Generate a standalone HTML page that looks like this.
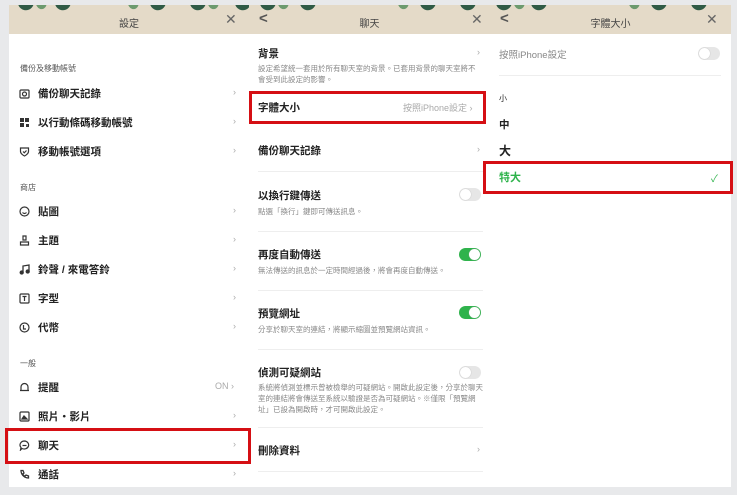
<!DOCTYPE html>
<html><head><meta charset="utf-8"><style>
*{margin:0;padding:0;box-sizing:border-box}
body{width:737px;height:495px;background:#e8e9eb;position:relative;overflow:hidden;font-family:"Liberation Sans","Noto Sans CJK TC",sans-serif;color:#222}
.a{position:absolute}
.hdr{position:absolute;top:5px;height:29px;background:#e4dac8;overflow:hidden}
.hdr .t{position:absolute;top:10px;width:100%;text-align:center;font-size:10px;color:#444}
.hdr .x{position:absolute;top:6px;font-size:14px;color:#666}
.hdr .b{position:absolute;top:5px;font-size:15px;color:#555;font-weight:bold}
.leaf{position:absolute;top:-7px;width:16px;height:12px;background:#2f5a45;transform:rotate(25deg);border-radius:0 0 10px 10px}
.lf2{position:absolute;top:-4px;width:10px;height:8px;background:#6c9a6e;transform:rotate(-30deg);border-radius:0 0 6px 6px}
.w{position:absolute;background:#fff;top:34px;height:453px}
.sec{position:absolute;font-size:8px;color:#555}
.it{position:absolute;font-size:10.5px;font-weight:bold;color:#222}
.ic{position:absolute;left:19px;width:11px;height:11px}
.ch{position:absolute;font-size:9px;color:#aaa}
.d{position:absolute;font-size:7.5px;color:#888;line-height:11px}
.ln{position:absolute;height:1px;background:#eee}
.tg{position:absolute;width:22px;height:13px;border-radius:7px;background:#e6e6e6}
.tg::after{content:"";position:absolute;top:1px;left:1px;width:11px;height:11px;border-radius:50%;background:#fff;box-shadow:0 0 1px #aaa}
.tg.on{background:#2fb34c}
.tg.on::after{left:10px}
.rb{position:absolute;border:3px solid #d50f14}
</style></head><body>
<div class="w" style="left:9px;width:722px"></div>
<div class="hdr" style="left:9px;width:240px"><div class="t">設定</div><div class="x" style="left:216px">✕</div>
<div class="leaf" style="left:8px"></div><div class="lf2" style="left:28px"></div><div class="leaf" style="left:45px"></div><div class="lf2" style="left:120px"></div><div class="leaf" style="left:140px"></div><div class="leaf" style="left:180px"></div><div class="lf2" style="left:200px"></div><div class="leaf" style="left:225px"></div></div>
<div class="hdr" style="left:249px;width:241px"><div class="t">聊天</div><div class="b" style="left:10px">&lt;</div><div class="x" style="left:222px">✕</div>
<div class="leaf" style="left:10px"></div><div class="lf2" style="left:30px"></div><div class="leaf" style="left:50px"></div><div class="lf2" style="left:150px"></div><div class="leaf" style="left:170px"></div><div class="leaf" style="left:210px"></div></div>
<div class="hdr" style="left:490px;width:241px"><div class="t">字體大小</div><div class="b" style="left:10px">&lt;</div><div class="x" style="left:216px">✕</div>
<div class="leaf" style="left:5px"></div><div class="lf2" style="left:25px"></div><div class="leaf" style="left:40px"></div><div class="lf2" style="left:140px"></div><div class="leaf" style="left:160px"></div><div class="leaf" style="left:200px"></div></div>

<!-- panel 1 -->
<div class="sec" style="left:20px;top:63px">備份及移動帳號</div>
<svg class="ic" style="top:88px" viewBox="0 0 11 11" fill="none" stroke="#333" stroke-width="1.2"><rect x="1" y="2" width="9" height="8" rx="1"/><circle cx="5.5" cy="6" r="2"/></svg>
<div class="it" style="left:38px;top:86px">備份聊天記錄</div><div class="ch" style="left:233px;top:87px">›</div>
<svg class="ic" style="top:117px" viewBox="0 0 11 11" fill="#333"><rect x="1" y="1" width="4" height="4"/><rect x="6" y="1" width="4" height="4"/><rect x="1" y="6" width="4" height="4"/><rect x="7" y="7" width="3" height="3"/></svg>
<div class="it" style="left:38px;top:115px">以行動條碼移動帳號</div><div class="ch" style="left:233px;top:116px">›</div>
<svg class="ic" style="top:146px" viewBox="0 0 11 11" fill="none" stroke="#333" stroke-width="1.2"><path d="M1.5 2h8v3.5c0 2.5-4 4.5-4 4.5s-4-2-4-4.5z"/><path d="M4 5.5l1.3 1.3L7.5 4.5"/></svg>
<div class="it" style="left:38px;top:144px">移動帳號選項</div><div class="ch" style="left:233px;top:145px">›</div>
<div class="sec" style="left:20px;top:182px">商店</div>
<svg class="ic" style="top:206px" viewBox="0 0 11 11" fill="none" stroke="#333" stroke-width="1.2"><circle cx="5.5" cy="5.5" r="4.5"/><path d="M3.5 6.5q2 2 4 0"/></svg>
<div class="it" style="left:38px;top:204px">貼圖</div><div class="ch" style="left:233px;top:205px">›</div>
<svg class="ic" style="top:235px" viewBox="0 0 11 11" fill="none" stroke="#333" stroke-width="1.2"><path d="M4 1h3v4H4zM1.5 10V7h8v3z"/></svg>
<div class="it" style="left:38px;top:233px">主題</div><div class="ch" style="left:233px;top:234px">›</div>
<svg class="ic" style="top:264px" viewBox="0 0 11 11" fill="none" stroke="#333" stroke-width="1.3"><path d="M4 8V2l6-1v6"/><circle cx="2.7" cy="8.5" r="1.5" fill="#333"/><circle cx="8.7" cy="7.5" r="1.5" fill="#333"/></svg>
<div class="it" style="left:38px;top:262px">鈴聲 / 來電答鈴</div><div class="ch" style="left:233px;top:263px">›</div>
<svg class="ic" style="top:293px" viewBox="0 0 11 11" fill="none" stroke="#333" stroke-width="1.2"><rect x="1" y="1" width="9" height="9" rx="1"/><path d="M3.5 3.5h4M5.5 3.5v4.5"/></svg>
<div class="it" style="left:38px;top:291px">字型</div><div class="ch" style="left:233px;top:292px">›</div>
<svg class="ic" style="top:322px" viewBox="0 0 11 11" fill="none" stroke="#333" stroke-width="1.2"><circle cx="5.5" cy="5.5" r="4.5"/><path d="M4.5 3v4h2.5"/></svg>
<div class="it" style="left:38px;top:320px">代幣</div><div class="ch" style="left:233px;top:321px">›</div>
<div class="sec" style="left:20px;top:358px">一般</div>
<svg class="ic" style="top:382px" viewBox="0 0 11 11" fill="none" stroke="#333" stroke-width="1.2"><path d="M2 8.5V5a3.5 3.5 0 0 1 7 0v3.5zM1 8.5h9"/></svg>
<div class="it" style="left:38px;top:380px">提醒</div><div class="ch" style="left:215px;top:381px">ON ›</div>
<svg class="ic" style="top:411px" viewBox="0 0 11 11" fill="none" stroke="#333" stroke-width="1.2"><rect x="1" y="1" width="9" height="9" rx="1"/><path d="M3 8l2-3 3 3z" fill="#333"/></svg>
<div class="it" style="left:38px;top:409px">照片・影片</div><div class="ch" style="left:233px;top:410px">›</div>
<svg class="ic" style="top:440px" viewBox="0 0 11 11" fill="none" stroke="#333" stroke-width="1.2"><path d="M5.5 1a4.5 4 0 1 1-2.5 7.5L1.5 10l.5-2.5A4.5 4 0 0 1 5.5 1z"/><path d="M3.5 5.5h4"/></svg>
<div class="it" style="left:38px;top:438px">聊天</div><div class="ch" style="left:233px;top:439px">›</div>
<svg class="ic" style="top:469px" viewBox="0 0 11 11" fill="none" stroke="#333" stroke-width="1.3"><path d="M2 1.5l2 0 1 2.5-1.3 1a5 5 0 0 0 2.3 2.3l1-1.3 2.5 1v2A7.5 7.5 0 0 1 2 1.5z"/></svg>
<div class="it" style="left:38px;top:467px">通話</div><div class="ch" style="left:233px;top:468px">›</div>
<div class="rb" style="left:5px;top:428px;width:246px;height:36px"></div>

<!-- panel 2 -->
<div class="it" style="left:258px;top:46px">背景</div><div class="ch" style="left:477px;top:47px">›</div>
<div class="d" style="left:258px;top:63px;width:222px">設定希望統一套用於所有聊天室的背景。已套用背景的聊天室將不會受到此設定的影響。</div>
<div class="it" style="left:258px;top:100px">字體大小</div><div class="ch" style="left:403px;top:101px">按照iPhone設定 ›</div>
<div class="rb" style="left:249px;top:91px;width:237px;height:33px"></div>
<div class="it" style="left:258px;top:143px">備份聊天記錄</div><div class="ch" style="left:477px;top:144px">›</div>
<div class="ln" style="left:258px;top:171px;width:225px"></div>
<div class="it" style="left:258px;top:188px">以換行鍵傳送</div><div class="tg" style="left:459px;top:188px"></div>
<div class="d" style="left:258px;top:206px">點選「換行」鍵即可傳送訊息。</div>
<div class="ln" style="left:258px;top:231px;width:225px"></div>
<div class="it" style="left:258px;top:247px">再度自動傳送</div><div class="tg on" style="left:459px;top:248px"></div>
<div class="d" style="left:258px;top:265px">無法傳送的訊息於一定時間經過後，將會再度自動傳送。</div>
<div class="ln" style="left:258px;top:290px;width:225px"></div>
<div class="it" style="left:258px;top:306px">預覽網址</div><div class="tg on" style="left:459px;top:306px"></div>
<div class="d" style="left:258px;top:324px">分享於聊天室的連結，將顯示縮圖並預覽網站資訊。</div>
<div class="ln" style="left:258px;top:349px;width:225px"></div>
<div class="it" style="left:258px;top:365px">偵測可疑網站</div><div class="tg" style="left:459px;top:366px"></div>
<div class="d" style="left:258px;top:382px;width:225px">系統將偵測並標示曾被檢舉的可疑網站。開啟此設定後，分享於聊天室的連結將會傳送至系統以驗證是否為可疑網站。※僅限「預覽網址」已設為開啟時，才可開啟此設定。</div>
<div class="ln" style="left:258px;top:427px;width:225px"></div>
<div class="it" style="left:258px;top:443px">刪除資料</div><div class="ch" style="left:477px;top:444px">›</div>
<div class="ln" style="left:258px;top:471px;width:225px"></div>

<!-- panel 3 -->
<div class="ch" style="left:499px;top:47px;color:#888;font-size:9.5px">按照iPhone設定</div><div class="tg" style="left:698px;top:47px"></div>
<div class="ln" style="left:499px;top:75px;width:222px"></div>
<div class="a" style="left:499px;top:93px;font-size:8px">小</div>
<div class="a" style="left:499px;top:117px;font-size:10.5px;font-weight:bold">中</div>
<div class="a" style="left:499px;top:142px;font-size:12px;font-weight:bold">大</div>
<div class="a" style="left:499px;top:169px;font-size:11px;font-weight:bold;color:#2fb34c">特大</div>
<div class="a" style="left:711px;top:170px;font-size:10px;color:#2fb34c">✓</div>
<div class="rb" style="left:483px;top:161px;width:250px;height:33px"></div>
</body></html>
